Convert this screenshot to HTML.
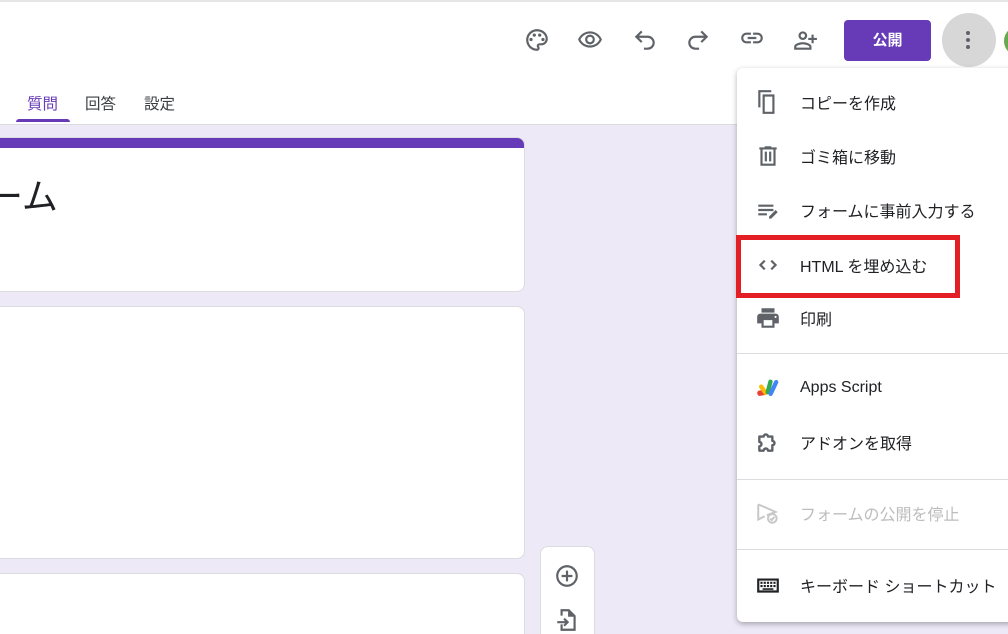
<!DOCTYPE html>
<html><head><meta charset="utf-8"><style>
*{margin:0;padding:0;box-sizing:border-box}
html{width:1008px;height:634px;overflow:hidden}
body{width:1008px;height:634px;overflow:hidden;position:relative;background:#fff;font-family:"Liberation Sans","Noto Sans CJK JP",sans-serif;color:#202124}
.abs{position:absolute}
.topline{left:0;top:0;width:1008px;height:2px;background:#e6e6e6}
.bg{left:0;top:124px;width:1008px;height:510px;background:#ede9f6;border-top:1px solid #dadce0}
.card{background:#fff;border-radius:8px;border:1px solid #dadce0}
.tab{top:92px;font-size:15.5px;color:#3c4043}
.ic{position:absolute;width:26px;height:26px}
.ic svg{width:26px;height:26px;fill:#5f6368}
.menu{left:737px;top:68px;width:290px;height:554px;background:#fff;border-radius:6px;box-shadow:0 2px 6px rgba(0,0,0,.3)}
.item{position:absolute;left:0;width:290px;height:40px}
.item .t{position:absolute;left:63px;top:50%;transform:translateY(-50%);font-size:16px;color:#202124;white-space:nowrap}
.item .i{position:absolute;left:18px;top:7px;width:26px;height:26px}
.item .i svg{width:26px;height:26px;fill:#5f6368}
.div{position:absolute;left:0;width:290px;height:1px;background:#dadce0}
</style></head><body>
<div class="abs topline"></div>
<div class="abs tab" style="left:27px;color:#673ab7">質問</div>
<div class="abs tab" style="left:85px">回答</div>
<div class="abs tab" style="left:144px">設定</div>
<div class="abs" style="left:16px;top:119px;width:54px;height:3px;background:#673ab7;border-radius:3px 3px 0 0"></div>
<div class="abs bg"></div>
<div class="abs card" style="left:-10px;top:137px;width:535px;height:155px;overflow:hidden"><div style="height:10px;background:#673ab7"></div><div style="position:absolute;left:-4px;top:30px;font-size:36px;color:#202124">ーム</div></div>
<div class="abs card" style="left:-10px;top:306px;width:535px;height:253px"></div>
<div class="abs card" style="left:-10px;top:573px;width:535px;height:80px"></div>
<div class="abs card" style="left:540px;top:546px;width:55px;height:100px"></div>
<div class="ic" style="left:554px;top:563px"><svg viewBox="0 0 24 24"><path d="M13 7h-2v4H7v2h4v4h2v-4h4v-2h-4V7zm-1-5C6.48 2 2 6.48 2 12s4.48 10 10 10 10-4.48 10-10S17.52 2 12 2zm0 18c-4.41 0-8-3.59-8-8s3.59-8 8-8 8 3.59 8 8-3.59 8-8 8z"/></svg></div>
<div class="ic" style="left:554px;top:607px"><svg viewBox="0 0 24 24"><path d="M14 2H6v6h2V4h5v5h5v11H8v-4H6v6h14V8l-6-6zM10 10l-1.4 1.4L10.2 13H3v2h7.2l-1.6 1.6L10 18l4-4-4-4z"/></svg></div>

<div class="ic" style="left:524px;top:27px"><svg viewBox="0 0 24 24"><path d="M12 22C6.490 22 2 17.51 2 12S6.49 2 12 2s10 4.04 10 9c0 3.31-2.69 6-6 6h-1.770c-.28 0-.5.22-.5.5 0 .12.05.23.13.33.41.47.64 1.06.64 1.67A2.5 2.5 0 0112 22zm0-18c-4.41 0-8 3.59-8 8s3.59 8 8 8c.28 0 .5-.22.5-.5a.54.54 0 00-.14-.35c-.41-.46-.63-1.05-.63-1.65a2.5 2.5 0 012.5-2.5H16c2.21 0 4-1.79 4-4 0-3.86-3.59-7-8-7z"/><circle cx="6.5" cy="11.5" r="1.5"/><circle cx="9.5" cy="7.5" r="1.5"/><circle cx="14.5" cy="7.5" r="1.5"/><circle cx="17.5" cy="11.5" r="1.5"/></svg></div>
<div class="ic" style="left:577px;top:27px"><svg viewBox="0 0 24 24"><path d="M12 6c3.79 0 7.17 2.13 8.82 5.5C19.17 14.87 15.790 17 12 17s-7.17-2.13-8.82-5.5C4.83 8.13 8.21 6 12 6m0-2C7 4 2.73 7.11 1 11.5 2.73 15.89 7 19 12 19s9.27-3.11 11-7.5C21.27 7.11 17 4 12 4zm0 5a2.5 2.5 0 010 5 2.5 2.5 0 010-5m0-2c-2.48 0-4.5 2.02-4.5 4.5S9.52 16 12 16s4.5-2.02 4.5-4.5S14.48 7 12 7z"/></svg></div>
<div class="ic" style="left:632px;top:27px"><svg viewBox="0 0 24 24" style="fill:none;stroke:#5f6368;stroke-width:2"><path d="M9 14L4 9l5-5M4 9h10.5a5.5 5.5 0 010 11H11"/></svg></div>
<div class="ic" style="left:685px;top:27px"><svg viewBox="0 0 24 24" style="fill:none;stroke:#5f6368;stroke-width:2"><path d="M15 14l5-5-5-5M20 9H9.5a5.5 5.5 0 000 11H13"/></svg></div>
<div class="ic" style="left:739px;top:25px"><svg viewBox="0 0 24 24"><path d="M17 7h-4v2h4c1.65 0 3 1.35 3 3s-1.35 3-3 3h-4v2h4c2.76 0 5-2.24 5-5s-2.24-5-5-5zm-6 8H7c-1.65 0-3-1.35-3-3s1.35-3 3-3h4V7H7c-2.76 0-5 2.24-5 5s2.24 5 5 5h4v-2zm-3-4h8v2H8z"/></svg></div>
<div class="ic" style="left:792px;top:27px"><svg viewBox="0 0 24 24"><path d="M10 12c2.21 0 4-1.79 4-4s-1.79-4-4-4-4 1.79-4 4 1.79 4 4 4zm0-6c1.1 0 2 .9 2 2s-.9 2-2 2-2-.9-2-2 .9-2 2-2zm0 8c-2.67 0-8 1.34-8 4v3h16v-3c0-2.66-5.33-4-8-4zm6 5H4v-.99C4.2 17.29 7.3 16 10 16s5.8 1.29 6 2v1zm4-9V7h-2v3h-3v2h3v3h2v-3h3v-2h-3z"/></svg></div>
<div class="abs" style="left:844px;top:20px;width:87px;height:41px;background:#673ab7;border-radius:4px;color:#fff;font-size:15px;text-align:center;line-height:41px;font-weight:bold">公開</div>
<div class="abs" style="left:942px;top:13px;width:54px;height:54px;border-radius:50%;background:#d7d7d7"></div>
<div class="abs" style="left:966px;top:31px;width:4px;height:4px;border-radius:50%;background:#5f6368"></div>
<div class="abs" style="left:966px;top:38px;width:4px;height:4px;border-radius:50%;background:#5f6368"></div>
<div class="abs" style="left:966px;top:45px;width:4px;height:4px;border-radius:50%;background:#5f6368"></div>
<div class="abs" style="left:1004px;top:26px;width:30px;height:30px;border-radius:50%;background:#6aa84f"></div>

<div class="abs menu">
 <div class="item" style="top:14px"><div class="i"><svg viewBox="0 0 24 24"><path d="M16 1H4v16h2V3h10V1zm3 4H8v18h11V5zm-2 16h-7V7h7v14z" transform="translate(-1 0)"/></svg></div><div class="t">コピーを作成</div></div>
 <div class="item" style="top:68px"><div class="i"><svg viewBox="0 0 24 24"><path d="M15 4V3H9v1H4v2h1v15h14V6h1V4h-5zm2 15H7V6h10v13zM9 8h2v9H9zm4 0h2v9h-2z"/></svg></div><div class="t">ゴミ箱に移動</div></div>
 <div class="item" style="top:122px"><div class="i"><svg viewBox="0 0 24 24"><path d="M3 7h14v2H3zm0 4h14v2H3zm0 4h8v2H3zm10 5v-2l6-6 2 2-6 6z"/></svg></div><div class="t">フォームに事前入力する</div></div>
 <div class="item" style="top:177px"><div class="i"><svg viewBox="0 0 24 24" style="fill:none;stroke:#5f6368;stroke-width:2"><path d="M9 8l-4 4 4 4M15 8l4 4-4 4"/></svg></div><div class="t">HTML を埋め込む</div></div>
 <div class="item" style="top:230px"><div class="i"><svg viewBox="0 0 24 24"><path d="M19 8H5c-1.66 0-3 1.34-3 3v6h4v4h12v-4h4v-6c0-1.66-1.34-3-3-3zm-3 11H8v-5h8v5zm3-7c-.55 0-1-.45-1-1s.45-1 1-1 1 .45 1 1-.45 1-1 1zm-1-9H6v4h12V3z"/></svg></div><div class="t">印刷</div></div>
 <div class="div" style="top:285px"></div>
 <div class="item" style="top:300px"><div class="i"><svg viewBox="0 0 24 24"><rect x="2" y="14" width="9" height="5" rx="2" fill="#ea4335" transform="rotate(-10 6 16)"/><rect x="6" y="8" width="4" height="11" rx="2" fill="#fbbc04" transform="rotate(-35 8 14)"/><rect x="11" y="4" width="4" height="14" rx="2" fill="#34a853" transform="rotate(15 13 11)"/><rect x="15" y="4" width="4" height="16" rx="2" fill="#4285f4" transform="rotate(25 17 12)"/></svg></div><div class="t">Apps Script</div></div>
 <div class="item" style="top:354px"><div class="i"><svg viewBox="0 0 24 24" style="fill:none;stroke:#5f6368;stroke-width:2.2;stroke-linejoin:round"><path d="M4 7h4a2 2 0 014 0h4v4a2 2 0 010 4v5h-4a2 2 0 00-4 0H4v-4a2 2 0 000-4z"/></svg></div><div class="t">アドオンを取得</div></div>
 <div class="div" style="top:411px"></div>
 <div class="item" style="top:425px"><div class="i"><svg viewBox="0 0 24 24" style="fill:none;stroke:#c8c8c8;stroke-width:1.8"><path d="M3 4l16 7-8 3M3 4v14l6-3"/><circle cx="16" cy="17" r="4"/><path d="M14 17l1.5 1.5 2.5-3"/></svg></div><div class="t" style="color:#bdbdbd">フォームの公開を停止</div></div>
 <div class="div" style="top:481px"></div>
 <div class="item" style="top:497px"><div class="i"><svg viewBox="0 0 24 24"><path d="M2 6h20v13H2zm2 2v9h16V8zm1 1h2v2H5zm3 0h2v2H8zm3 0h2v2h-2zm3 0h2v2h-2zm3 0h2v2h-2zM5 12h2v2H5zm3 0h2v2H8zm3 0h2v2h-2zm3 0h2v2h-2zm3 0h2v2h-2zM7 15h10v1.5H7z" style="fill:#202124"/></svg></div><div class="t">キーボード ショートカット</div></div>
</div>
<div class="abs" style="left:736px;top:235px;width:224px;height:63px;border:5px solid #e31e24"></div>
</body></html>
